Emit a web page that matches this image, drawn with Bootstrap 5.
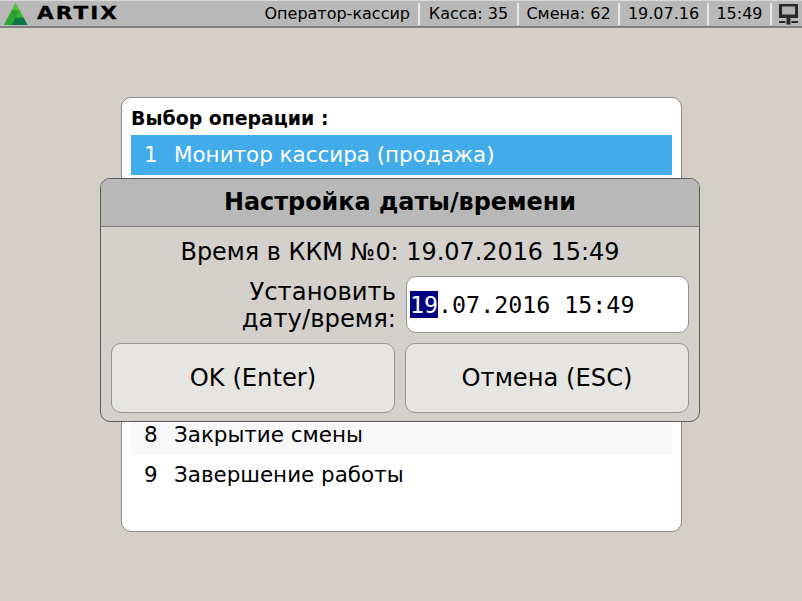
<!DOCTYPE html>
<html lang="ru">
<head>
<meta charset="utf-8">
<title>Artix</title>
<link href="https://cdn.jsdelivr.net/npm/bootstrap@5.3.0/dist/css/bootstrap.min.css" rel="stylesheet">
<style>
html,body{height:100%;}
body{background:#d4d0c8;font-family:"DejaVu Sans",sans-serif;color:#000;overflow:hidden;}
.top-strip{height:28px;background:#b8b8b8;border-top:1px solid #d8d8d8;border-bottom:2px solid #808080;}
.brand-word{display:inline-block;font-family:"DejaVu Sans",sans-serif;font-weight:700;font-size:17px;letter-spacing:1.6px;line-height:1;margin-left:9px;transform:scaleX(1.27);transform-origin:left center;-webkit-text-stroke:.3px #000;}
.logo-box{margin-left:4px;}
.stat-cell{font-size:16px;line-height:22px;border-left:2px solid #e8e8e8;white-space:nowrap;text-align:center;}
.stat-first{border-left:0;padding-right:8px;}
.cell-till{width:99px;}
.cell-shift{width:101px;}
.cell-date{width:89px;}
.cell-time{width:63px;}
.net-cell{padding:0 4px 0 7px;border-left:2px solid #e8e8e8;height:22px;}
.stage{position:relative;height:573px;padding:69px 120px 0 121px;}
.menu-panel{height:435px;background:#fff;border:1px solid #8a8a8a;border-radius:10px;padding:9px 9px 0;}
.menu-title{font-weight:700;font-size:18.9px;line-height:22px;margin-bottom:6px;}
.menu-row{height:40px;font-size:21.45px;display:flex;align-items:center;padding-left:13px;}
.menu-row:nth-child(even){background:#f8f8f8;}
.menu-row.is-active{background:#42abea;color:#fff;}
.menu-num{width:30px;}
.dialog-box{position:absolute;left:100px;top:150px;width:600px;height:244px;background:#d4d0cc;border:1px solid #5a5a5a;border-radius:10px;overflow:hidden;}
.dialog-head{height:48px;padding-top:1px;background:#b8b8b8;border-bottom:1px solid #808080;font-weight:700;font-size:23.9px;}
.dialog-body{padding:10px 10px 0;}
.dialog-now{font-size:23.9px;line-height:28px;padding-top:1px;height:28px;text-align:center;}
.set-row{margin-top:11px;gap:10px;}
.set-label{font-size:24.3px;line-height:27px;width:285px;padding-top:1px;text-align:right;}
.set-input{width:283px;height:57px;padding-top:1px;background:#fff;border:1px solid #969696;border-radius:10px;font-family:"DejaVu Sans Mono",monospace;font-size:23.3px;padding-left:3px;}
.sel-part{background:#000080;color:#fff;}
.btn-row{margin-top:10px;gap:10px;}
.act-btn{width:284px;height:70px;background:#e7e5e2;border:1px solid #969696;border-radius:10px;font-size:24.2px;color:#000;padding:0;}
.act-btn:hover,.act-btn:active{background:#e7e5e2!important;border-color:#969696!important;color:#000!important;}
</style>
</head>
<body>
<div class="top-strip d-flex align-items-center">
  <svg class="logo-box" width="24" height="23" viewBox="0 0 24 23">
    <polygon points="11.5,1 23.5,23 0,23" fill="#2fa52f"/>
    <polygon points="11.5,1 15.5,8.5 7.5,8.5" fill="#4fc53a"/>
    <polygon points="7.5,8.5 15.5,8.5 11.5,15.5" fill="#2a9c35"/>
    <polygon points="3.7,15.5 11.5,15.5 7.5,23 0,23" fill="#2fa63a"/>
    <polygon points="11.5,15.5 19.5,15.5 23.5,23 7.5,23" fill="#0e7845"/>
    <polygon points="11.5,15.5 15.5,8.5 19.5,15.5" fill="#3bb536"/>
  </svg>
  <span class="brand-word">ARTIX</span>
  <div class="d-flex align-items-center ms-auto">
    <div class="stat-cell stat-first">Оператор-кассир</div>
    <div class="stat-cell cell-till">Касса: 35</div>
    <div class="stat-cell cell-shift">Смена: 62</div>
    <div class="stat-cell cell-date">19.07.16</div>
    <div class="stat-cell cell-time">15:49</div>
    <div class="net-cell d-flex align-items-center">
      <svg width="19" height="22" viewBox="0 0 19 22">
        <rect x="0" y="1" width="19" height="14" fill="#2a2a2a"/>
        <rect x="3" y="3.5" width="13" height="8" fill="#b4b4b4"/>
        <rect x="7.5" y="12" width="4" height="9.5" fill="#2a2a2a"/>
        <rect x="0" y="18" width="6.5" height="2" fill="#2a2a2a"/>
        <rect x="12.5" y="18" width="6.5" height="2" fill="#2a2a2a"/>
      </svg>
    </div>
  </div>
</div>
<div class="stage">
  <div class="menu-panel">
    <div class="menu-title">Выбор операции :</div>
    <div>
      <div class="menu-row is-active"><span class="menu-num">1</span><span>Монитор кассира (продажа)</span></div>
      <div class="menu-row"></div>
      <div class="menu-row"></div>
      <div class="menu-row"></div>
      <div class="menu-row"></div>
      <div class="menu-row"></div>
      <div class="menu-row"></div>
      <div class="menu-row"><span class="menu-num">8</span><span>Закрытие смены</span></div>
      <div class="menu-row"><span class="menu-num">9</span><span>Завершение работы</span></div>
    </div>
  </div>
  <div class="dialog-box">
    <div class="dialog-head d-flex align-items-center justify-content-center">Настройка даты/времени</div>
    <div class="dialog-body">
      <div class="dialog-now">Время в ККМ №0: 19.07.2016 15:49</div>
      <div class="set-row d-flex align-items-center">
        <div class="set-label">Установить<br>дату/время:</div>
        <div class="set-input d-flex align-items-center"><span><span class="sel-part">19</span>.07.2016 15:49</span></div>
      </div>
      <div class="btn-row d-flex">
        <button type="button" class="btn act-btn">OK (Enter)</button>
        <button type="button" class="btn act-btn">Отмена (ESC)</button>
      </div>
    </div>
  </div>
</div>
<script src="https://cdn.jsdelivr.net/npm/bootstrap@5.3.0/dist/js/bootstrap.bundle.min.js"></script>
</body>
</html>
